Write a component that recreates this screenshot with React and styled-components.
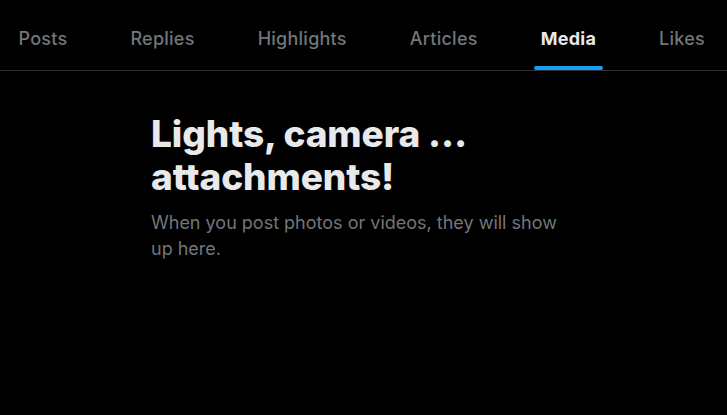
import React from 'react';
import styled, { createGlobalStyle } from 'styled-components';

const GlobalStyle = createGlobalStyle`
  html, body {
    margin: 0;
    padding: 0;
    background: #000;
  }
  body {
    font-family: Inter, "Noto Sans", sans-serif;
    -webkit-font-smoothing: antialiased;
  }
`;

const Page = styled.div`
  width: 727px;
  height: 415px;
  background: #000;
  overflow: hidden;
`;

const TabStrip = styled.nav`
  height: 70px;
  border-bottom: 1px solid #2f3336;
  overflow: hidden;
`;

const TabRow = styled.div`
  display: flex;
  height: 100%;
  margin-left: -13px;
`;

const Tab = styled.div`
  flex-shrink: 0;
  display: flex;
  align-items: center;
  justify-content: center;
  padding: 0 31.5px;
  font-size: 18px;
  letter-spacing: 0.25px;
  font-weight: ${props => (props.active ? 700 : 500)};
  color: ${props => (props.active ? '#e7e9ea' : '#71767b')};
  cursor: pointer;
`;

const TabLabel = styled.span`
  position: relative;
  display: flex;
  align-items: center;
  height: 100%;
  padding-top: 6px;
  box-sizing: border-box;
`;

const Underline = styled.div`
  position: absolute;
  left: -7px;
  right: -7px;
  bottom: 0;
  height: 4px;
  border-radius: 9999px;
  background: #1d9bf0;
`;

const Empty = styled.section`
  width: 425px;
  margin: 41px auto 0;
`;

const Title = styled.h2`
  margin: 0 0 12px;
  font-size: 37px;
  line-height: 43px;
  font-weight: 800;
  color: #e7e9ea;
  letter-spacing: -0.1px;
`;

const Subtitle = styled.p`
  margin: 0;
  font-size: 18px;
  line-height: 26px;
  font-weight: 400;
  color: #71767b;
`;

const tabs = ['Posts', 'Replies', 'Highlights', 'Articles', 'Media', 'Likes'];

export default function App() {
  const current = 'Media';
  return (
    <Page>
      <GlobalStyle />
      <TabStrip>
        <TabRow>
          {tabs.map(name => (
            <Tab key={name} active={name === current}>
              <TabLabel>
                {name}
                {name === current && <Underline />}
              </TabLabel>
            </Tab>
          ))}
        </TabRow>
      </TabStrip>
      <Empty>
        <Title>Lights, camera … attachments!</Title>
        <Subtitle>When you post photos or videos, they will show up here.</Subtitle>
      </Empty>
    </Page>
  );
}
